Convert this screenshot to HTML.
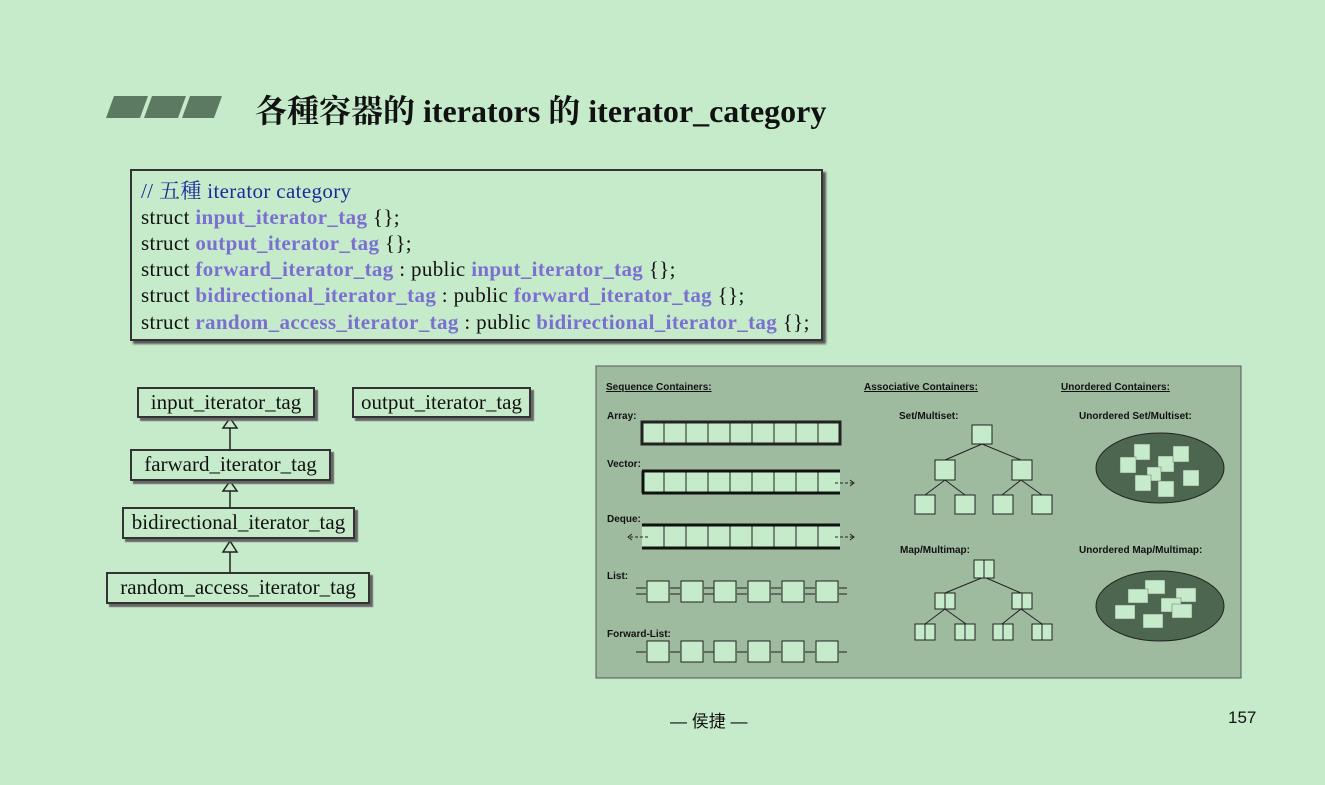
<!DOCTYPE html>
<html><head><meta charset="utf-8"><style>
body{margin:0;width:1325px;height:785px;background:#c6ebcb;position:relative;overflow:hidden;font-family:"Liberation Serif","Noto Serif CJK SC",serif}
.a{position:absolute}
.title{left:255px;top:86px;font-size:32px;font-weight:bold;color:#111;white-space:nowrap}
.code{left:130px;top:169px;width:689px;height:168px;border:2px solid #333;box-shadow:3px 3px 2px #555;background:#c6ebcb}
.code div{position:absolute;left:9px;font-size:21px;line-height:24px;height:24px;white-space:nowrap;color:#111;letter-spacing:0.35px}
.code div.c{color:#1a2a9a}
.p{color:#7b6fd0;font-weight:bold}
.box{background:#c6ebcb;border:2px solid #333;box-shadow:3px 3px 1px #666;font-size:21px;text-align:center;line-height:27px;color:#111;white-space:nowrap;box-sizing:border-box}
</style></head><body>
<svg class="a" style="left:0;top:0" width="1325" height="785">
<g fill="#5c7a62"><polygon points="114,96 148,96 140,118 106,118"/><polygon points="152,96 186,96 178,118 144,118"/><polygon points="190,96 222,96 214,118 182,118"/></g>
<g stroke="#222" stroke-width="1.5" fill="#c6ebcb">
<line x1="230" y1="428" x2="230" y2="449"/><polygon points="223,428 237,428 230,418"/>
<line x1="230" y1="491" x2="230" y2="507"/><polygon points="223,491 237,491 230,481"/>
<line x1="230" y1="552" x2="230" y2="572"/><polygon points="223,552 237,552 230,541"/>
</g>
</svg>
<div class="a title">各種容器的 iterators 的 iterator_category</div>
<div class="a code">
<div style="top:8px" class="c">// 五種 iterator category</div>
<div style="top:34px">struct <span class="p">input_iterator_tag</span> {};</div>
<div style="top:60px">struct <span class="p">output_iterator_tag</span> {};</div>
<div style="top:86px">struct <span class="p">forward_iterator_tag</span> : public <span class="p">input_iterator_tag</span> {};</div>
<div style="top:112px">struct <span class="p">bidirectional_iterator_tag</span> : public <span class="p">forward_iterator_tag</span> {};</div>
<div style="top:139px">struct <span class="p">random_access_iterator_tag</span> : public <span class="p">bidirectional_iterator_tag</span> {};</div>
</div>
<div class="a box" style="left:137px;top:387px;width:178px;height:31px">input_iterator_tag</div>
<div class="a box" style="left:352px;top:387px;width:179px;height:31px">output_iterator_tag</div>
<div class="a box" style="left:130px;top:449px;width:201px;height:32px">farward_iterator_tag</div>
<div class="a box" style="left:122px;top:507px;width:233px;height:32px">bidirectional_iterator_tag</div>
<div class="a box" style="left:106px;top:572px;width:264px;height:32px">random_access_iterator_tag</div>

<svg class="a" style="left:595px;top:365px" width="648" height="316" viewBox="595 365 648 316" font-family="Liberation Sans,sans-serif" font-weight="bold" font-size="10">
<rect x="596" y="366" width="645" height="312" fill="#9fbb9f" stroke="#555"/>
<g fill="#111">
<text x="606" y="390" text-decoration="underline">Sequence Containers:</text>
<text x="864" y="390" text-decoration="underline">Associative Containers:</text>
<text x="1061" y="390" text-decoration="underline">Unordered Containers:</text>
<text x="607" y="419">Array:</text><text x="607" y="467">Vector:</text><text x="607" y="522">Deque:</text>
<text x="607" y="579">List:</text><text x="607" y="637">Forward-List:</text>
<text x="899" y="419">Set/Multiset:</text><text x="1079" y="419">Unordered Set/Multiset:</text>
<text x="900" y="553">Map/Multimap:</text><text x="1079" y="553">Unordered Map/Multimap:</text>
</g>
<g fill="#c6ebcb" stroke="#222" stroke-width="1">
<rect x="642" y="422" width="198" height="22" stroke-width="3"/>
<rect x="642" y="471" width="198" height="22" stroke="none"/>
<rect x="642" y="526" width="198" height="22" stroke="none"/>
</g>
<g stroke="#222" stroke-width="1">
<path d="M664,422v22M686,422v22M708,422v22M730,422v22M752,422v22M774,422v22M796,422v22M818,422v22"/>
<path d="M642,471v22M664,471v22M686,471v22M708,471v22M730,471v22M752,471v22M774,471v22M796,471v22M818,471v22"/>
<path d="M664,526v22M686,526v22M708,526v22M730,526v22M752,526v22M774,526v22M796,526v22M818,526v22"/>
</g>
<g stroke="#111" stroke-width="3"><path d="M642,471H840M642,493H840M643,471v22M642,525H840M642,548H840"/></g>
<g stroke="#222" stroke-width="1" fill="none" stroke-dasharray="3,2"><path d="M835,483h18M835,537h18M648,537h-18"/></g>
<g stroke="#222" fill="none"><path d="M850,480l4,3-4,3M850,534l4,3-4,3M632,534l-4,3 4,3"/></g>
<g fill="#c6ebcb" stroke="#222">
<rect x="647" y="581" width="22" height="21"/><rect x="681" y="581" width="22" height="21"/><rect x="714" y="581" width="22" height="21"/><rect x="748" y="581" width="22" height="21"/><rect x="782" y="581" width="22" height="21"/><rect x="816" y="581" width="22" height="21"/>
<rect x="647" y="641" width="22" height="21"/><rect x="681" y="641" width="22" height="21"/><rect x="714" y="641" width="22" height="21"/><rect x="748" y="641" width="22" height="21"/><rect x="782" y="641" width="22" height="21"/><rect x="816" y="641" width="22" height="21"/>
</g>
<g stroke="#222" fill="none">
<path d="M636,588h10M636,594h10M670,588h10M670,594h10M704,588h10M704,594h10M737,588h10M737,594h10M771,588h10M771,594h10M805,588h10M805,594h10M839,588h8M839,594h8"/>
<path d="M636,652h10M670,652h10M704,652h10M737,652h10M771,652h10M805,652h10M839,652h8"/>
</g>
<g stroke="#222" fill="none">
<path d="M982,444L945,460M982,444L1021,460M945,480L925,495M945,480L965,495M1021,480L1002,495M1021,480L1042,495"/>
<path d="M984,577L945,593M984,577L1021,593M945,609L925,624M945,609L966,624M1021,609L1002,624M1021,609L1042,624"/>
</g>
<g fill="#c6ebcb" stroke="#222">
<rect x="972" y="425" width="20" height="19"/><rect x="935" y="460" width="20" height="20"/><rect x="1012" y="460" width="20" height="20"/>
<rect x="915" y="495" width="20" height="19"/><rect x="955" y="495" width="20" height="19"/><rect x="993" y="495" width="20" height="19"/><rect x="1032" y="495" width="20" height="19"/>
<rect x="974" y="560" width="20" height="18"/><rect x="935" y="593" width="20" height="16"/><rect x="1012" y="593" width="20" height="16"/>
<rect x="915" y="624" width="20" height="16"/><rect x="955" y="624" width="20" height="16"/><rect x="993" y="624" width="20" height="16"/><rect x="1032" y="624" width="20" height="16"/>
<path d="M984,560v18M945,593v16M1022,593v16M925,624v16M965,624v16M1003,624v16M1042,624v16"/>
</g>
<ellipse cx="1160" cy="468" rx="64" ry="35" fill="#4d6650" stroke="#222"/>
<ellipse cx="1160" cy="606" rx="64" ry="35" fill="#4d6650" stroke="#222"/>
<g fill="#c6ebcb" stroke="#666" stroke-width=".5">
<rect x="1134" y="444" width="16" height="16"/><rect x="1120" y="457" width="16" height="16"/><rect x="1158" y="456" width="16" height="16"/><rect x="1173" y="446" width="16" height="16"/><rect x="1147" y="467" width="14" height="14"/><rect x="1183" y="470" width="16" height="16"/><rect x="1135" y="475" width="16" height="16"/><rect x="1158" y="481" width="16" height="16"/>
<rect x="1145" y="580" width="20" height="14"/><rect x="1128" y="589" width="20" height="14"/><rect x="1176" y="588" width="20" height="14"/><rect x="1161" y="598" width="20" height="14"/><rect x="1115" y="605" width="20" height="14"/><rect x="1172" y="604" width="20" height="14"/><rect x="1143" y="614" width="20" height="14"/>
</g>
</svg>
<div class="a" style="left:670px;top:707px;font-size:17px;color:#111;font-family:'Liberation Sans','Noto Sans CJK SC',sans-serif">— 侯捷 —</div>
<div class="a" style="left:1228px;top:708px;font-size:17px;color:#111;font-family:'Liberation Sans',sans-serif">157</div>
</body></html>
